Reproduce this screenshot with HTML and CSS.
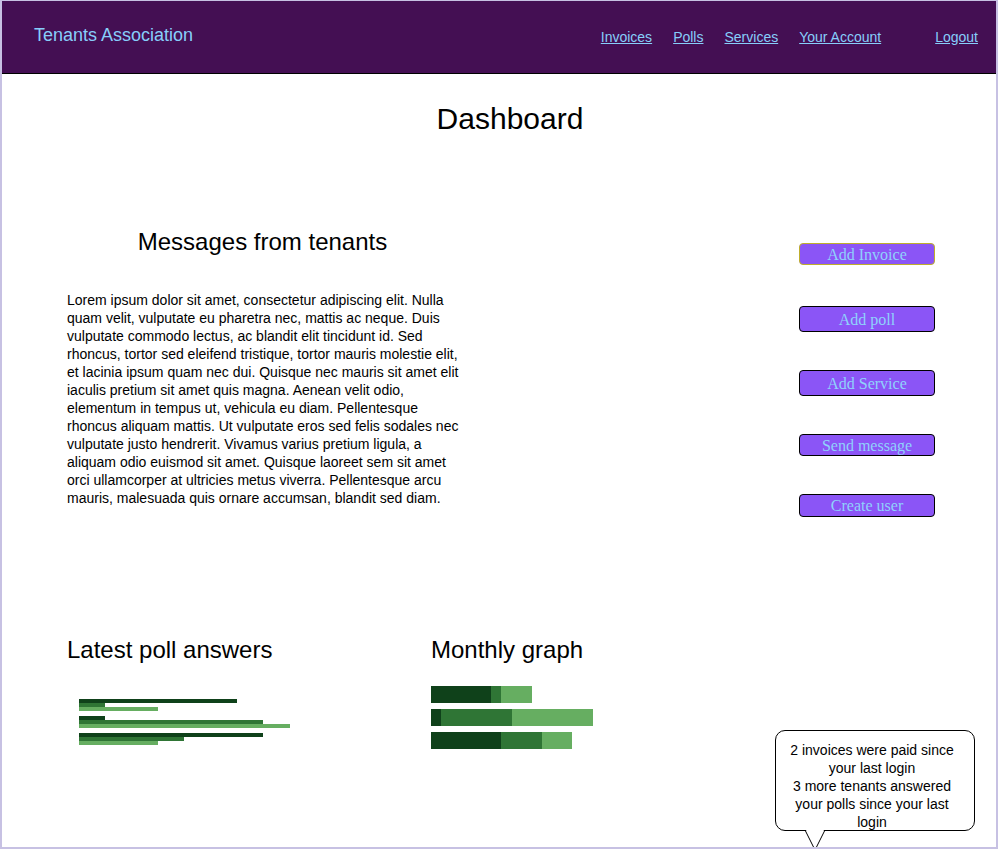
FILE: index.html
```html
<!DOCTYPE html>
<html lang="en">
<head>
<meta charset="utf-8">
<title>Tenants Association - Dashboard</title>
<link rel="stylesheet" href="styles.css">
</head>
<body>
<div class="page">
  <header class="topbar">
    <span class="brand">Tenants Association</span>
    <nav class="nav">
      <a href="#">Invoices</a>
      <a href="#">Polls</a>
      <a href="#">Services</a>
      <a href="#">Your Account</a>
      <a href="#" class="logout">Logout</a>
    </nav>
  </header>
  <main class="main">
    <h1 class="title">Dashboard</h1>
    <section class="middle">
      <div class="messages">
        <h2 class="messages-title">Messages from tenants</h2>
        <p class="messages-text">Lorem ipsum dolor sit amet, consectetur adipiscing elit. Nulla quam velit, vulputate eu pharetra nec, mattis ac neque. Duis vulputate commodo lectus, ac blandit elit tincidunt id. Sed rhoncus, tortor sed eleifend tristique, tortor mauris molestie elit, et lacinia ipsum quam nec dui. Quisque nec mauris sit amet elit iaculis pretium sit amet quis magna. Aenean velit odio, elementum in tempus ut, vehicula eu diam. Pellentesque rhoncus aliquam mattis. Ut vulputate eros sed felis sodales nec vulputate justo hendrerit. Vivamus varius pretium ligula, a aliquam odio euismod sit amet. Quisque laoreet sem sit amet orci ullamcorper at ultricies metus viverra. Pellentesque arcu mauris, malesuada quis ornare accumsan, blandit sed diam.</p>
      </div>
      <div class="actions">
        <button class="btn btn-sm btn-focus">Add Invoice</button>
        <button class="btn btn-lg">Add poll</button>
        <button class="btn btn-lg">Add Service</button>
        <button class="btn btn-sm">Send message</button>
        <button class="btn btn-md">Create user</button>
      </div>
    </section>
    <section class="bottom">
      <div class="polls">
        <h2 class="section-title">Latest poll answers</h2>
        <div class="poll-chart">
          <div class="poll-group">
            <div class="pbar dark" style="width:158px"></div>
            <div class="pbar mid" style="width:26px"></div>
            <div class="pbar light" style="width:79px"></div>
          </div>
          <div class="poll-group">
            <div class="pbar dark" style="width:26px"></div>
            <div class="pbar mid" style="width:184px"></div>
            <div class="pbar light" style="width:211px"></div>
          </div>
          <div class="poll-group">
            <div class="pbar dark" style="width:184px"></div>
            <div class="pbar mid" style="width:105px"></div>
            <div class="pbar light" style="width:79px"></div>
          </div>
        </div>
      </div>
      <div class="graph">
        <h2 class="section-title">Monthly graph</h2>
        <div class="graph-chart">
          <div class="grow">
            <div class="seg dark" style="width:60px"></div>
            <div class="seg mid" style="width:10px"></div>
            <div class="seg light" style="width:31px"></div>
          </div>
          <div class="grow">
            <div class="seg dark" style="width:10px"></div>
            <div class="seg mid" style="width:71px"></div>
            <div class="seg light" style="width:81px"></div>
          </div>
          <div class="grow">
            <div class="seg dark" style="width:70px"></div>
            <div class="seg mid" style="width:41px"></div>
            <div class="seg light" style="width:30px"></div>
          </div>
        </div>
      </div>
    </section>
  </main>
  <div class="bubble">2 invoices were paid since your last login<br>3 more tenants answered your polls since your last login</div>
  <svg class="bubble-tail" width="22" height="22" viewBox="0 0 22 22">
    <polygon points="1.5,0 20.5,0 11,20" fill="#ffffff"/>
    <line x1="1" y1="1" x2="10.5" y2="20" stroke="#000" stroke-width="1"/>
    <line x1="21" y1="1" x2="11.5" y2="20" stroke="#000" stroke-width="1"/>
  </svg>
</div>
</body>
</html>
```

FILE: styles.css
```css
* { box-sizing: border-box; }

html, body {
  margin: 0;
  padding: 0;
  background: #ffffff;
}

body {
  font-family: "Liberation Sans", Arial, sans-serif;
  color: #000;
}

.page {
  position: relative;
  height: 849px;
  overflow: hidden;
  border-style: solid;
  border-color: #c7c1e3;
  border-width: 1px 2px 2px 2px;
  background: #fff;
}

.topbar {
  height: 73px;
  background: #440f53;
  border-bottom: 1px solid #000;
  display: flex;
  align-items: flex-start;
  justify-content: space-between;
  padding: 0 18px 0 32px;
}

.brand {
  font-size: 18px;
  line-height: 20px;
  color: #87cefa;
  padding-top: 24px;
}

.nav {
  display: flex;
  gap: 21px;
  padding-top: 28px;
}

.nav a {
  font-size: 14px;
  line-height: 16px;
  color: #87cefa;
  text-decoration: underline;
}

.nav .logout {
  margin-left: 33px;
}

.main {
  padding: 0 61px 0 65px;
}

.title {
  margin: 28px 0 0 0;
  font-size: 30px;
  line-height: 34px;
  font-weight: normal;
  text-align: center;
  padding-left: 18px;
}

.middle {
  display: flex;
  justify-content: space-between;
  align-items: flex-start;
}

.messages {
  width: 395px;
}

.messages-title {
  margin: 92px 0 0 0;
  padding-right: 4px;
  font-size: 24px;
  line-height: 28px;
  font-weight: normal;
  text-align: center;
}

.messages-text {
  margin: 35px 0 0 0;
  font-size: 14px;
  line-height: 18px;
}

.actions {
  width: 136px;
  display: flex;
  flex-direction: column;
  gap: 38px;
  margin-top: 107px;
}

.btn {
  display: block;
  width: 136px;
  padding: 1px 0 0 0;
  font-family: "Liberation Serif", "Times New Roman", serif;
  font-size: 16px;
  color: #8fd2fb;
  background: #8b55f6;
  border: 1px solid #000;
  border-radius: 4px;
}

.btn-sm { height: 22px; }
.btn-md { height: 23px; }
.btn-lg { height: 26px; }

.btn-focus {
  border-color: #bfae2c;
  margin-bottom: 3px;
}

.bottom {
  display: flex;
  margin-top: 119px;
}

.polls {
  width: 364px;
}

.section-title {
  margin: 0;
  font-size: 24px;
  line-height: 28px;
  font-weight: normal;
}

.poll-chart {
  margin-top: 35px;
  padding-left: 12px;
  display: flex;
  flex-direction: column;
  gap: 5px;
}

.poll-group {
  display: flex;
  flex-direction: column;
}

.pbar {
  height: 4px;
}

.graph-chart {
  margin-top: 22px;
  display: flex;
  flex-direction: column;
  gap: 6px;
}

.grow {
  display: flex;
  height: 17px;
}

.seg { height: 17px; }

.dark { background: #0f411a; }
.mid { background: #2f7535; }
.light { background: #66ae61; }

.bubble {
  position: absolute;
  left: 773px;
  top: 729px;
  width: 200px;
  height: 101px;
  border: 1px solid #000;
  border-radius: 10px;
  background: #fff;
  padding: 10px 14px 0 8px;
  font-size: 14px;
  line-height: 18px;
  text-align: center;
}

.bubble-tail {
  position: absolute;
  left: 802px;
  top: 828px;
}
```
